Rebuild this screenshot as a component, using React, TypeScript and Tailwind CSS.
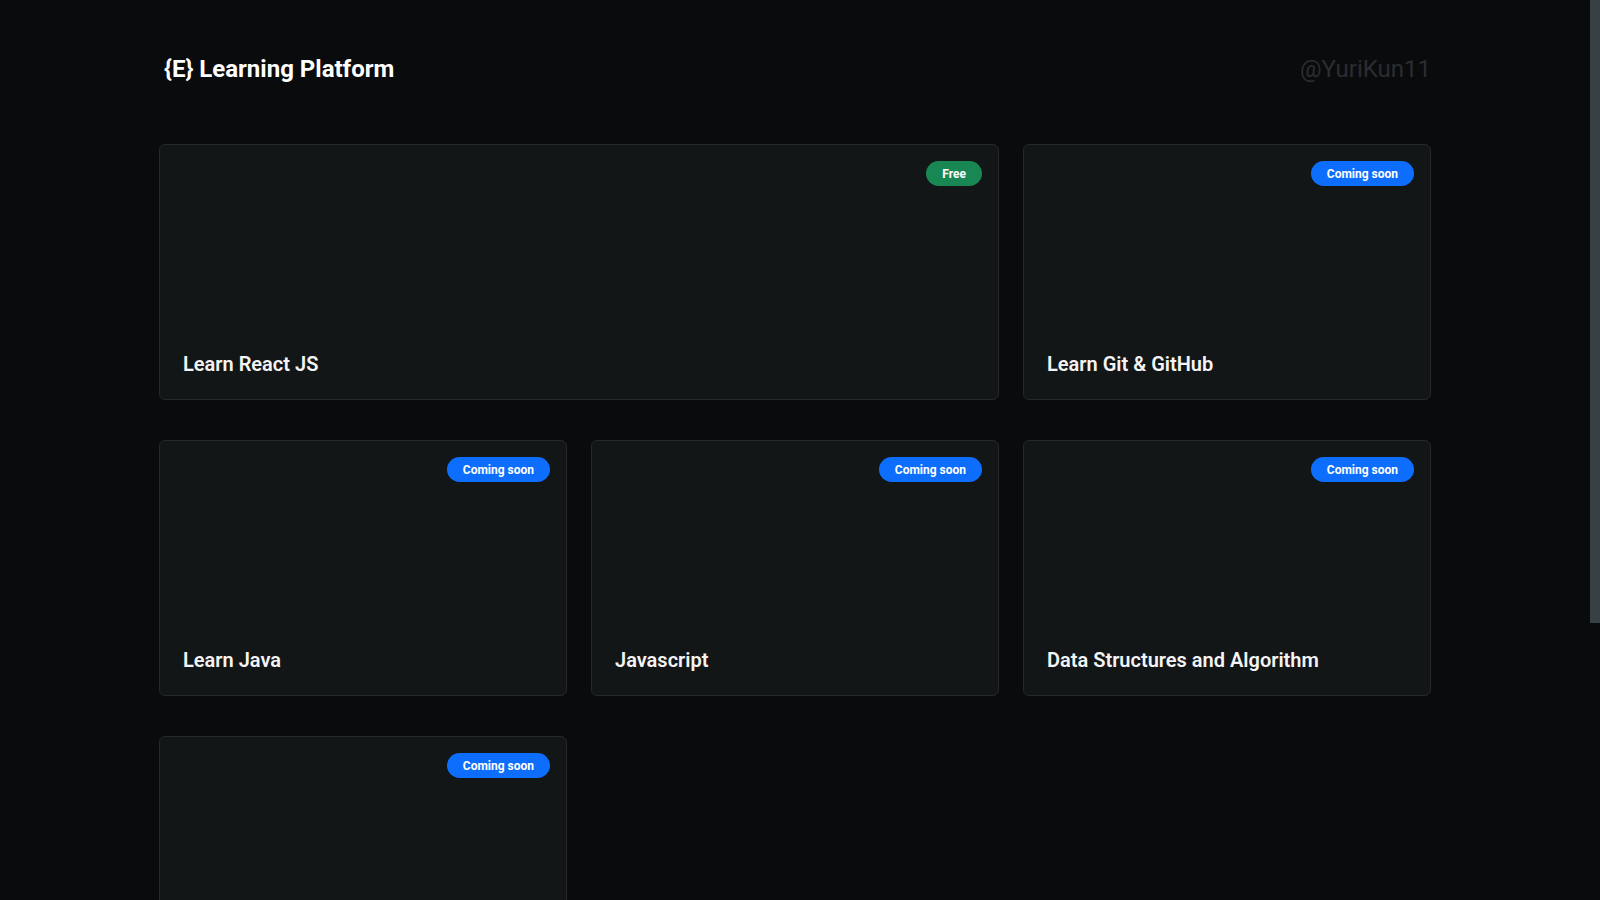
const courses = [
  { title: 'Learn React JS', badge: 'Free', wide: true },
  { title: 'Learn Git & GitHub', badge: 'Coming soon' },
  { title: 'Learn Java', badge: 'Coming soon' },
  { title: 'Javascript', badge: 'Coming soon' },
  { title: 'Data Structures and Algorithm', badge: 'Coming soon' },
  { title: '', badge: 'Coming soon' },
];

function Badge({ label }: { label: string }) {
  const color = label === 'Free' ? 'bg-[#198754]' : 'bg-[#0d6efd]';
  return (
    <span className={`${color} h-[25px] px-4 rounded-full flex items-center text-[12px] font-bold text-white`}>
      {label}
    </span>
  );
}

export default function App() {
  return (
    <div
      className="h-screen overflow-hidden flex bg-[#0a0b0d] text-white"
      style={{ fontFamily: 'Roboto, "Liberation Sans", sans-serif' }}
    >
      <main className="flex-1 min-w-0">
        <div className="w-[1272px] mx-auto pb-[308px]">
          <header className="h-[137px] flex items-center justify-between pl-[5px]">
            <h1 className="text-[24px] font-bold">{'{E}'} Learning Platform</h1>
            <span className="text-[24px] text-[#2a2d31]">@YuriKun11</span>
          </header>

          <div className="mt-[7px] grid grid-cols-3 gap-x-6 gap-y-10">
            {courses.map((c, i) => (
              <div
                key={i}
                className={`h-[256px] rounded-[6px] border border-[#25292c] bg-[#121617] flex flex-col justify-between ${c.wide ? 'col-span-2' : ''}`}
              >
                <div className="flex justify-end pt-4 pr-4">
                  <Badge label={c.badge} />
                </div>
                <h2 className="pl-[23px] pr-6 pb-[21px] text-[20px] leading-7 font-semibold text-[#f4f4f4]">{c.title}</h2>
              </div>
            ))}
          </div>
        </div>
      </main>

      {/* scrollbar */}
      <div className="w-[10px] shrink-0 bg-[#0a0b0d]">
        <div className="h-[623px] bg-[#374042]" />
      </div>
    </div>
  );
}
